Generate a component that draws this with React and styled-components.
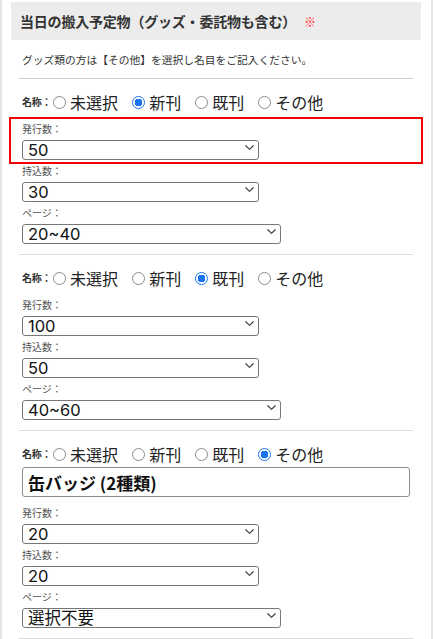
import React from "react";
import styled, { createGlobalStyle } from "styled-components";

const Global = createGlobalStyle`
  html, body { margin: 0; padding: 0; background: #fff; }
  body { font-family: "Noto Sans CJK JP", "Noto Sans", sans-serif; color: #333; }
  * { box-sizing: border-box; }
`;

const Page = styled.div`
  width: 433px;
  min-height: 639px;
  border-left: 2px solid #e6e6e6;
  border-right: 2px solid #e6e6e6;
  padding-top: 2px;
  overflow: hidden;
`;

const Header = styled.h2`
  margin: 0 10px 0 9px;
  height: 38px;
  background: #ececec;
  display: flex;
  align-items: center;
  padding-left: 9px;
  font-size: 14px;
  font-weight: 700;
  color: #333;
  letter-spacing: -0.2px;
`;

const Required = styled.span`
  color: #ff1a1a;
  font-weight: 400;
  font-size: 12px;
  margin-left: 8px;
`;

const Body = styled.div`
  padding: 0 18px 0 17px;
`;

const Note = styled.p`
  margin: 12px 0 0;
  padding: 0 3px 10px;
  font-size: 10.75px;
  line-height: 16px;
  color: #333;
  border-bottom: 1px solid #cfcfcf;
`;

const Block = styled.div`
  padding: 13px 3px;
  border-bottom: 1px solid #dcdcdc;
`;

const NameRow = styled.div`
  display: flex;
  align-items: center;
  height: 20px;
`;

const NameLabel = styled.span`
  font-size: 10px;
  font-weight: 700;
  color: #333;
  line-height: 20px;
  margin-right: 2px;
  letter-spacing: -0.3px;
`;

const Option = styled.label`
  display: flex;
  align-items: center;
  margin-right: 14px;
  font-size: 16px;
  line-height: 20px;
  color: #222;
`;

const Radio = styled.input.attrs({ type: "radio" })`
  appearance: none;
  -webkit-appearance: none;
  margin: 0 4px 0 0;
  width: 13px;
  height: 13px;
  border-radius: 50%;
  border: 1px solid #8a8a8a;
  background: #fff;
  flex: none;
  &:checked {
    border: 1.5px solid #1a73f0;
    background: radial-gradient(circle, #1a73f0 0 3.6px, #fff 4px);
  }
`;

const TextInput = styled.input`
  display: block;
  width: 100%;
  height: 30px;
  margin-top: 3px;
  border: 1px solid #8d8d8d;
  border-radius: 3px;
  padding: 0 5px;
  font-family: "Noto Sans CJK JP", sans-serif;
  font-size: 17px;
  font-weight: 700;
  color: #111;
  background: #fff;
`;

const Fields = styled.div`
  display: flex;
  flex-direction: column;
  gap: 8px;
  margin-top: ${(p) => (p.$afterInput ? "10px" : "11px")};
`;

const Field = styled.div`
  display: flex;
  flex-direction: column;
  align-items: flex-start;
  ${(p) =>
    p.$error &&
    `
    margin: -6px -13px -7px;
    border: 2px solid #f50000;
    padding: 4px 11px 5px;
  `}
`;

const FieldLabel = styled.span`
  font-size: 10px;
  line-height: 12px;
  color: #555;
  margin-bottom: 2px;
`;

const SelectWrap = styled.div`
  position: relative;
  width: ${(p) => p.$w}px;
  height: 20px;
`;

const Select = styled.select`
  appearance: none;
  -webkit-appearance: none;
  width: 100%;
  height: 20px;
  margin: 0;
  border: 1px solid #777;
  border-radius: 3px;
  background: #fff;
  padding: 0 20px 0 5px;
  font-family: "Inter", "Noto Sans CJK JP", sans-serif;
  font-size: 16.5px;
  line-height: 18px;
  color: #111;
`;

const Chevron = styled.svg`
  position: absolute;
  right: 5px;
  top: 8px;
  width: 9px;
  height: 5px;
  pointer-events: none;
`;

function Dropdown({ width, value, options }) {
  return (
    <SelectWrap $w={width}>
      <Select defaultValue={value}>
        {options.map((o) => (
          <option key={o} value={o}>
            {o}
          </option>
        ))}
      </Select>
      <Chevron viewBox="0 0 9 5">
        <path d="M0.5 0.5 L4.5 4.3 L8.5 0.5" fill="none" stroke="#333" strokeWidth="1.1" />
      </Chevron>
    </SelectWrap>
  );
}

const KINDS = ["未選択", "新刊", "既刊", "その他"];
const NUMS = ["20", "30", "50", "100"];
const PAGES = ["選択不要", "20~40", "40~60"];

const items = [
  { kind: "新刊", issue: "50", carry: "30", page: "20~40", errorIssue: true },
  { kind: "既刊", issue: "100", carry: "50", page: "40~60" },
  { kind: "その他", name: "缶バッジ (2種類)", issue: "20", carry: "20", page: "選択不要" },
];

function Item({ item, idx }) {
  return (
    <Block>
      <NameRow>
        <NameLabel>名称：</NameLabel>
        {KINDS.map((k) => (
          <Option key={k}>
            <Radio name={`kind${idx}`} defaultChecked={k === item.kind} />
            {k}
          </Option>
        ))}
      </NameRow>
      {item.name && <TextInput defaultValue={item.name} />}
      <Fields $afterInput={!!item.name}>
        <Field $error={item.errorIssue}>
          <FieldLabel>発行数：</FieldLabel>
          <Dropdown width={237} value={item.issue} options={NUMS} />
        </Field>
        <Field>
          <FieldLabel>持込数：</FieldLabel>
          <Dropdown width={237} value={item.carry} options={NUMS} />
        </Field>
        <Field>
          <FieldLabel>ページ：</FieldLabel>
          <Dropdown width={259} value={item.page} options={PAGES} />
        </Field>
      </Fields>
    </Block>
  );
}

export default function App() {
  return (
    <>
      <Global />
      <Page>
        <Header>
          当日の搬入予定物（グッズ・委託物も含む）<Required>※</Required>
        </Header>
        <Body>
          <Note>グッズ類の方は【その他】を選択し名目をご記入ください。</Note>
          {items.map((it, i) => (
            <Item key={i} item={it} idx={i} />
          ))}
        </Body>
      </Page>
    </>
  );
}
